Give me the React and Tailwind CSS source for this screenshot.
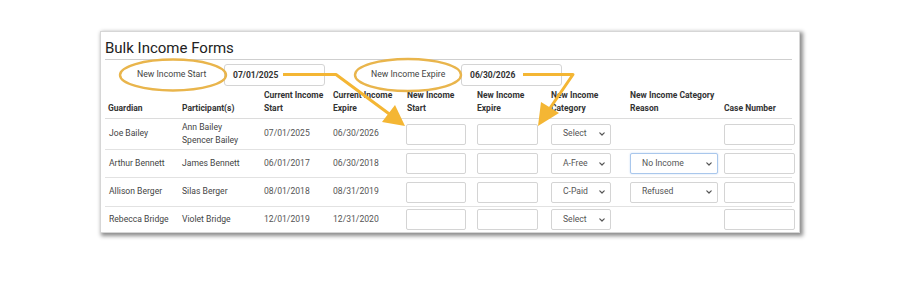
import React from "react";

const rows = [
  { guardian: "Joe Bailey", kids: ["Ann Bailey", "Spencer Bailey"], start: "07/01/2025", expire: "06/30/2026", category: "Select", reason: null, height: "h-[31px]" },
  { guardian: "Arthur Bennett", kids: ["James Bennett"], start: "06/01/2017", expire: "06/30/2018", category: "A-Free", reason: "No Income", focused: true, height: "h-[28px]" },
  { guardian: "Allison Berger", kids: ["Silas Berger"], start: "08/01/2018", expire: "08/31/2019", category: "C-Paid", reason: "Refused", height: "h-[29px]" },
  { guardian: "Rebecca Bridge", kids: ["Violet Bridge"], start: "12/01/2019", expire: "12/31/2020", category: "Select", reason: null, height: "h-[25px]", last: true },
];

const cols = "grid grid-cols-[74px_82px_69px_73px_71px_74px_79px_94px_77px]";

const Chevron = () => (
  <svg width="6" height="4" viewBox="0 0 6 4" fill="none">
    <path d="M0.8 0.8 L3 3 L5.2 0.8" stroke="#555" strokeWidth="1.2" strokeLinecap="round" strokeLinejoin="round" />
  </svg>
);

const FakeSelect = ({ value, width, focused }) => (
  <div
    className={`${width} h-[21px] flex items-center justify-between pl-[11px] pr-[5px] rounded-[2px] border bg-white text-[#555] ${
      focused ? "border-[#a9c7ec] shadow-[0_0_2px_rgba(80,140,220,0.35)]" : "border-[#d4d4d4]"
    }`}
  >
    <span>{value}</span>
    <Chevron />
  </div>
);

const Box = ({ width }) => <div className={`${width} h-[21px] rounded-[2px] border border-[#d4d4d4] bg-white`} />;

const Overlay = () => (
  <svg className="absolute inset-0 pointer-events-none" width="900" height="300" viewBox="0 0 900 300">
    <ellipse cx="173" cy="75" rx="53" ry="15.5" fill="none" stroke="#e9b54c" strokeWidth="2.4" />
    <ellipse cx="408" cy="75" rx="53" ry="16" fill="none" stroke="#e9b54c" strokeWidth="2.4" />
    <polyline points="283,74.5 336,74.5 392,116" fill="none" stroke="#f4b634" strokeWidth="3" strokeLinejoin="round" />
    <polygon points="405,126 382,122 395,105" fill="#f4b634" />
    <polyline points="523,74.5 573,74.5 546,114" fill="none" stroke="#f4b634" strokeWidth="3" strokeLinejoin="round" />
    <polygon points="538,126 541,102 559,113" fill="#f4b634" />
  </svg>
);

export default function App() {
  return (
    <div className="relative w-[900px] h-[300px] bg-white pl-[100px] pt-[31px] font-['Roboto','Liberation_Sans',sans-serif]">
      <div className="w-[700px] h-[202px] overflow-hidden bg-white border border-[#d6d6d6] shadow-[2px_2px_4px_1px_rgba(0,0,0,0.45)] pt-[7px] pl-[4px] pr-[7px]">
        <div className="text-[15px] leading-[18px] text-[#222]">Bulk Income Forms</div>
        <div className="mt-[2px] h-px bg-[#cfcfcf]" />

        <div className="mt-[4px] flex items-center h-[22px] text-[8.7px] text-[#444]">
          <span className="ml-[32px] w-[87px]">New Income Start</span>
          <div className="w-[101px] h-[22px] rounded-[3px] border border-[#d4d4d4] flex items-center pl-[8px] font-bold text-[8.5px] text-[#333]">
            07/01/2025
          </div>
          <span className="ml-[46px] w-[90px]">New Income Expire</span>
          <div className="w-[101px] h-[22px] rounded-[3px] border border-[#d4d4d4] flex items-center pl-[8px] font-bold text-[8.5px] text-[#333]">
            06/30/2026
          </div>
        </div>

        <div className={`${cols} mt-[3px] items-end pb-[3px] border-b border-[#dcdcdc] text-[8.5px] leading-[13px] font-bold text-[#333]`}>
          <div className="pl-[3px]">Guardian</div>
          <div className="pl-[3px]">Participant(s)</div>
          <div className="pl-[3px]">Current Income<br />Start</div>
          <div className="pl-[3px]">Current Income<br />Expire</div>
          <div className="pl-[4px]">New Income<br />Start</div>
          <div className="pl-[3px]">New Income<br />Expire</div>
          <div className="pl-[3px]">New Income<br />Category</div>
          <div className="pl-[3px]">New Income Category<br />Reason</div>
          <div className="pl-[3px]">Case Number</div>
        </div>

        {rows.map((r) => (
          <div
            key={r.guardian}
            className={`${cols} ${r.height} items-center text-[8.6px] leading-[13.5px] text-[#444] ${r.last ? "" : "border-b border-[#e2e2e2]"}`}
          >
            <div className="pl-[4px]">{r.guardian}</div>
            <div className="pl-[3px]">
              {r.kids.map((k) => (
                <div key={k}>{k}</div>
              ))}
            </div>
            <div className="pl-[3px] text-[#555]">{r.start}</div>
            <div className="pl-[3px] text-[#555]">{r.expire}</div>
            <div className="pl-[3px]"><Box width="w-[60px]" /></div>
            <div className="pl-[3px]"><Box width="w-[61px]" /></div>
            <div className="pl-[3px]"><FakeSelect value={r.category} width="w-[60px]" /></div>
            <div className="pl-[3px]">
              {r.reason && <FakeSelect value={r.reason} width="w-[88px]" focused={r.focused} />}
            </div>
            <div className="pl-[3px]"><Box width="w-[71px]" /></div>
          </div>
        ))}
      </div>
      <Overlay />
    </div>
  );
}
